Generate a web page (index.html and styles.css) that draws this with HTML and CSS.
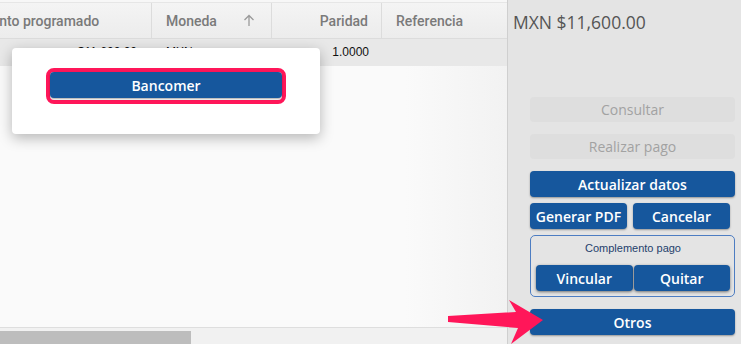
FILE: index.html
```html
<!DOCTYPE html>
<html lang="es">
<head>
<meta charset="utf-8">
<title>Pagos</title>
<link rel="stylesheet" href="styles.css">
</head>
<body>
<div class="page">
  <section class="grid">
    <div class="grid-top"></div>
    <div class="grid-viewport">
      <div class="grid-inner">
        <div class="row head">
          <div class="cell c1">Monto programado</div>
          <div class="cell c2">Moneda
            <svg class="sort" width="12" height="13" viewBox="0 0 12 13"><path d="M6 12V1.5M1.5 6L6 1.5 10.5 6" fill="none" stroke="#9a9a9a" stroke-width="1.3"/></svg>
          </div>
          <div class="cell c3 right">Paridad</div>
          <div class="cell c4">Referencia</div>
        </div>
        <div class="row data">
          <div class="cell c1 right num">$11,600.00</div>
          <div class="cell c2 num">MXN</div>
          <div class="cell c3 right num">1.0000</div>
          <div class="cell c4"></div>
        </div>
      </div>
    </div>
    <div class="grid-fill"></div>
    <div class="scrollbar"><div class="thumb"></div></div>

    <div class="popup">
      <div class="focus-ring"><button class="btn pop-btn">Bancomer</button></div>
    </div>
  </section>

  <aside class="panel">
    <div class="total">MXN $11,600.00</div>
    <div class="actions">
      <button class="btn disabled">Consultar</button>
      <button class="btn disabled gap12">Realizar pago</button>
      <button class="btn gap12">Actualizar datos</button>
      <div class="pair gap6">
        <button class="btn">Generar PDF</button>
        <button class="btn">Cancelar</button>
      </div>
      <div class="comp gap6">
        <div class="comp-title">Complemento pago</div>
        <div class="comp-row">
          <button class="btn">Vincular</button>
          <button class="btn">Quitar</button>
        </div>
      </div>
      <button class="btn gap12">Otros</button>
    </div>
  </aside>

  <svg class="arrow" width="100" height="46" viewBox="0 0 100 46">
    <polygon points="0,17 68,13 61,1 95,21 63,45 70,29 0,23" fill="#ff1659"/>
  </svg>
</div>
</body>
</html>
```

FILE: styles.css
```css
* { box-sizing: border-box; }
html, body { margin: 0; padding: 0; }
body {
  width: 741px;
  height: 344px;
  overflow: hidden;
  font-family: "Open Sans", "Liberation Sans", sans-serif;
  background: #fafafa;
}
.page {
  position: relative;
  display: flex;
  width: 741px;
  height: 344px;
}

/* ---------- grid ---------- */
.grid {
  position: relative;
  width: 507px;
  display: flex;
  flex-direction: column;
  background: #fafafa;
  overflow: hidden;
}
.grid-top {
  height: 3px;
  background: #f7f7f7;
  border-bottom: 1px solid #e6e6e6;
}
.grid-viewport { overflow: hidden; }
.grid-inner { margin-left: -31px; }
.row { display: flex; }
.row.head {
  height: 36px;
  background: linear-gradient(#f4f4f4, #ececec);
  border-bottom: 1px solid #dcdcdc;
}
.row.data {
  height: 27px;
  background: #e8e8e8;
}
.cell {
  display: flex;
  align-items: center;
  flex: none;
  white-space: nowrap;
}
.head .cell {
  font-family: Roboto, "Liberation Sans", sans-serif;
  font-weight: 500;
  font-size: 14px;
  color: #7a7a7a;
  border-right: 1px solid #dcdcdc;
}
.c1 { width: 183px; padding: 0 15px 0 10px; }
.c2 { width: 120px; padding: 0 14px; justify-content: space-between; }
.c3 { width: 110px; padding: 0 13px; }
.c4 { width: 160px; padding: 0 14px; border-right: none !important; }
.right { justify-content: flex-end; }
.sort { margin-right: 2px; }
.num {
  font-family: "Liberation Sans", Arial, sans-serif;
  font-size: 12px;
  color: #111;
}
.data .cell { padding-bottom: 2px; }
.grid-fill {
  flex: 1;
  background: linear-gradient(90deg, #fafafa 80%, #f2f2f2);
  border-bottom: 1px solid #dedede;
}
.scrollbar {
  height: 16px;
  background: #f1f1f1;
  padding-top: 3px;
}
.thumb {
  width: 191px;
  height: 13px;
  background: #bdbdbd;
}

/* ---------- popup ---------- */
.popup {
  position: absolute;
  left: 12px;
  top: 48px;
  width: 308px;
  height: 86px;
  background: #fff;
  border-radius: 4px;
  box-shadow: 0 4px 14px rgba(0, 0, 0, 0.28);
  padding: 20px 0 0 34px;
}
.focus-ring {
  width: 240px;
  height: 36px;
  border: 4px solid #ff1659;
  border-radius: 8px;
  display: flex;
}
.pop-btn {
  flex: 1;
  height: 100%;
  border-radius: 4px;
  border-bottom: 2px solid #b9c2cc;
  font-size: 14px;
  box-shadow: none;
}

/* ---------- panel ---------- */
.panel {
  flex: 1;
  background: #e4e4e4;
  border-left: 1px solid #cfcfcf;
  display: flex;
  flex-direction: column;
}
.total {
  font-size: 17.5px;
  line-height: 20px;
  color: #555;
  margin: 12px 0 0 5px;
}
.actions {
  display: flex;
  flex-direction: column;
  padding: 0 6px 0 22px;
  margin-top: 65px;
}
.btn {
  display: flex;
  align-items: center;
  justify-content: center;
  height: 26px;
  margin: 0;
  padding: 0;
  border: none;
  border-radius: 4px;
  background: #16579d;
  color: #fff;
  font-family: "Open Sans", "Liberation Sans", sans-serif;
  font-weight: 600;
  font-size: 14px;
  box-shadow: 0 1px 2px rgba(0, 0, 0, 0.35);
}
.btn.disabled {
  height: 25px;
  background: #dedede;
  color: #a2a2a2;
  font-weight: 400;
  box-shadow: none;
}
.gap12 { margin-top: 12px; }
.gap6 { margin-top: 6px; }
.pair {
  display: flex;
  gap: 6px;
  padding-right: 5px;
}
.pair .btn { width: 97px; }
.comp {
  height: 62px;
  border: 1px solid #4d7dc2;
  border-radius: 5px;
  padding: 0 4px 0 5px;
}
.comp-title {
  font-family: "Liberation Sans", Arial, sans-serif;
  font-size: 11px;
  color: #1f3f6c;
  text-align: center;
  margin-top: 6px;
  line-height: 13px;
}
.comp-row {
  display: flex;
  gap: 1px;
  margin-top: 10px;
}
.comp-row .btn { flex: 1; box-shadow: 0 1px 3px rgba(0, 0, 0, 0.5); }

/* ---------- arrow ---------- */
.arrow {
  position: absolute;
  left: 448px;
  top: 299px;
}
```
